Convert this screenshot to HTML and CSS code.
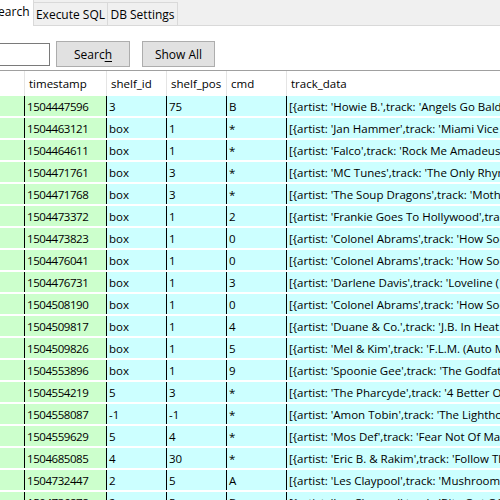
FILE: index.html
```html
<!DOCTYPE html>
<html>
<head>
<meta charset="utf-8">
<link rel="stylesheet" href="styles.css">
</head>
<body>
<div class="window">
  <div class="tabbar">
    <div class="tab active">Search</div>
    <div class="tab">Execute SQL</div>
    <div class="tab">DB Settings</div>
  </div>
  <div class="pane">
    <div class="toolbar">
      <div class="field"></div>
      <div class="btn btn-search">Searc<u>h</u></div>
      <div class="btn btn-all">Show All</div>
    </div>
    <div class="table">
      <div class="row head">
        <div class="c c0"></div>
        <div class="c c1">timestamp</div>
        <div class="c c2">shelf_id</div>
        <div class="c c3">shelf_pos</div>
        <div class="c c4">cmd</div>
        <div class="c c5">track_data</div>
      </div>
      <div class="body">
        <div class="row"><div class="c c0"></div><div class="c c1 num">1504447596</div><div class="c c2">3</div><div class="c c3">75</div><div class="c c4">B</div><div class="c c5">[{artist: 'Howie B.',track: 'Angels Go Bald: Too'}]</div></div>
        <div class="row"><div class="c c0"></div><div class="c c1 num">1504463121</div><div class="c c2">box</div><div class="c c3">1</div><div class="c c4">*</div><div class="c c5">[{artist: 'Jan Hammer',track: 'Miami Vice Theme'}]</div></div>
        <div class="row"><div class="c c0"></div><div class="c c1 num">1504464611</div><div class="c c2">box</div><div class="c c3">1</div><div class="c c4">*</div><div class="c c5">[{artist: 'Falco',track: 'Rock Me Amadeus'}]</div></div>
        <div class="row"><div class="c c0"></div><div class="c c1 num">1504471761</div><div class="c c2">box</div><div class="c c3">3</div><div class="c c4">*</div><div class="c c5">[{artist: 'MC Tunes',track: 'The Only Rhyme That Bites'}]</div></div>
        <div class="row"><div class="c c0"></div><div class="c c1 num">1504471768</div><div class="c c2">box</div><div class="c c3">3</div><div class="c c4">*</div><div class="c c5">[{artist: 'The Soup Dragons',track: 'Mother Universe'}]</div></div>
        <div class="row"><div class="c c0"></div><div class="c c1 num">1504473372</div><div class="c c2">box</div><div class="c c3">1</div><div class="c c4">2</div><div class="c c5">[{artist: 'Frankie Goes To Hollywood',track: 'Relax'}]</div></div>
        <div class="row"><div class="c c0"></div><div class="c c1 num">1504473823</div><div class="c c2">box</div><div class="c c3">1</div><div class="c c4">0</div><div class="c c5">[{artist: 'Colonel Abrams',track: 'How Soon We Forget'}]</div></div>
        <div class="row"><div class="c c0"></div><div class="c c1 num">1504476041</div><div class="c c2">box</div><div class="c c3">1</div><div class="c c4">0</div><div class="c c5">[{artist: 'Colonel Abrams',track: 'How Soon We Forget'}]</div></div>
        <div class="row"><div class="c c0"></div><div class="c c1 num">1504476731</div><div class="c c2">box</div><div class="c c3">1</div><div class="c c4">3</div><div class="c c5">[{artist: 'Darlene Davis',track: 'Loveline (12" Mix)'}]</div></div>
        <div class="row"><div class="c c0"></div><div class="c c1 num">1504508190</div><div class="c c2">box</div><div class="c c3">1</div><div class="c c4">0</div><div class="c c5">[{artist: 'Colonel Abrams',track: 'How Soon We Forget'}]</div></div>
        <div class="row"><div class="c c0"></div><div class="c c1 num">1504509817</div><div class="c c2">box</div><div class="c c3">1</div><div class="c c4">4</div><div class="c c5">[{artist: 'Duane &amp; Co.',track: 'J.B. In Heat (Club Mix)'}]</div></div>
        <div class="row"><div class="c c0"></div><div class="c c1 num">1504509826</div><div class="c c2">box</div><div class="c c3">1</div><div class="c c4">5</div><div class="c c5">[{artist: 'Mel &amp; Kim',track: 'F.L.M. (Auto Mix)'}]</div></div>
        <div class="row"><div class="c c0"></div><div class="c c1 num">1504553896</div><div class="c c2">box</div><div class="c c3">1</div><div class="c c4">9</div><div class="c c5">[{artist: 'Spoonie Gee',track: 'The Godfather'}]</div></div>
        <div class="row"><div class="c c0"></div><div class="c c1 num">1504554219</div><div class="c c2">5</div><div class="c c3">3</div><div class="c c4">*</div><div class="c c5">[{artist: 'The Pharcyde',track: '4 Better Or 4 Worse'}]</div></div>
        <div class="row"><div class="c c0"></div><div class="c c1 num">1504558087</div><div class="c c2">-1</div><div class="c c3">-1</div><div class="c c4">*</div><div class="c c5">[{artist: 'Amon Tobin',track: 'The Lighthouse'}]</div></div>
        <div class="row"><div class="c c0"></div><div class="c c1 num">1504559629</div><div class="c c2">5</div><div class="c c3">4</div><div class="c c4">*</div><div class="c c5">[{artist: 'Mos Def',track: 'Fear Not Of Man'}]</div></div>
        <div class="row"><div class="c c0"></div><div class="c c1 num">1504685085</div><div class="c c2">4</div><div class="c c3">30</div><div class="c c4">*</div><div class="c c5">[{artist: 'Eric B. &amp; Rakim',track: 'Follow The Leader'}]</div></div>
        <div class="row"><div class="c c0"></div><div class="c c1 num">1504732447</div><div class="c c2">2</div><div class="c c3">5</div><div class="c c4">A</div><div class="c c5">[{artist: 'Les Claypool',track: 'Mushroom Men'}]</div></div>
        <div class="row"><div class="c c0"></div><div class="c c1 num">1504736878</div><div class="c c2">2</div><div class="c c3">5</div><div class="c c4">B</div><div class="c c5">[{artist: 'Les Claypool',track: 'Bite Out Of Life'}]</div></div>
      </div>
    </div>
  </div>
</div>
</body>
</html>
```

FILE: styles.css
```css
html, body {
  margin: 0;
  padding: 0;
  background: #ffffff;
}
body {
  width: 500px;
  height: 500px;
  overflow: hidden;
  font-family: "Open Sans", "Noto Sans", sans-serif;
  font-size: 11.5px;
  color: #000000;
}
.window {
  width: 500px;
  height: 500px;
  overflow: hidden;
}
.tabbar {
  height: 25px;
  background: #f0f0f0;
  border-bottom: 1px solid #d9d9d9;
  display: flex;
  align-items: flex-end;
  margin-left: -13px;
  position: relative;
}
.tab {
  box-sizing: border-box;
  height: 23px;
  border: 1px solid #d9d9d9;
  border-bottom: none;
  background: #f0f0f0;
  display: flex;
  align-items: center;
  justify-content: center;
  font-size: 12px;
  margin-left: -1px;
}
.tab.active {
  height: 27px;
  margin-bottom: -1px;
  background: #ffffff;
  width: 47px;
  margin-left: 0;
  border-top: none;
  padding-bottom: 2px;
}
.tab:nth-child(2) { width: 75px; }
.tab:nth-child(3) { width: 71px; }
.pane {
  background: #ffffff;
}
.toolbar {
  display: flex;
  align-items: flex-start;
  height: 26px;
  margin-top: 15px;
  margin-bottom: 3px;
}
.field {
  box-sizing: border-box;
  width: 70px;
  height: 23px;
  margin-top: 2px;
  margin-left: -20px;
  border: 1px solid #7a7a7a;
  background: #ffffff;
}
.btn {
  box-sizing: border-box;
  height: 26px;
  border: 1px solid #adadad;
  background: #e1e1e1;
  display: flex;
  align-items: center;
  justify-content: center;
  font-size: 12px;
}
.btn u {
  text-decoration-thickness: 1px;
  text-underline-offset: 2px;
}
.btn-search {
  width: 74px;
  margin-left: 6px;
}
.btn-all {
  width: 73px;
  margin-left: 12px;
}
.table {
  border-top: 1px solid #a0a0a0;
}
.row {
  display: grid;
  grid-template-columns: 24px 82px 60px 60px 60px 1fr;
  height: 20px;
}
.row.head {
  height: 25px;
  background: #ffffff;
}
.body {
  display: flex;
  flex-direction: column;
  gap: 2px;
}
.c {
  box-sizing: border-box;
  white-space: nowrap;
  overflow: hidden;
  display: flex;
  align-items: center;
  padding-left: 2px;
  border-left: 1px solid #000000;
  background: #ccffff;
}
.c0 {
  border-left: none;
  background: #ccffcc;
}
.c1 {
  background: #ccffcc;
}
.num {
  letter-spacing: -0.45px;
}
.head .c {
  background: #ffffff;
  border-left: 1px solid #e5e5e5;
  padding-left: 4px;
  padding-bottom: 1px;
}
.head .c0 {
  border-left: none;
}
```
